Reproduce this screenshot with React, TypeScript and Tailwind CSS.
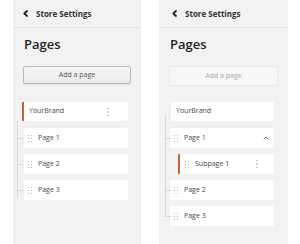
import type { ReactNode } from 'react'

const font = { fontFamily: '"Open Sans", "Noto Sans", Arial, sans-serif' }

function Chevron() {
  return (
    <svg width="5" height="7" viewBox="0 0 5 7" fill="none" stroke="#222" strokeWidth="1.8" strokeLinecap="round" strokeLinejoin="round">
      <path d="M4 1L1.3 3.5L4 6" />
    </svg>
  )
}

function Handle() {
  return (
    <svg width="4" height="7" viewBox="0 0 4 7" fill="#b5b5b5">
      <rect x="0" y="0" width="1" height="1" />
      <rect x="0" y="3" width="1" height="1" />
      <rect x="0" y="6" width="1" height="1" />
      <rect x="3" y="0" width="1" height="1" />
      <rect x="3" y="3" width="1" height="1" />
      <rect x="3" y="6" width="1" height="1" />
    </svg>
  )
}

function Kebab() {
  return (
    <svg width="2" height="8" viewBox="0 0 2 8" fill="#9a9a9a">
      <rect x="0.5" y="0" width="1" height="1.4" />
      <rect x="0.5" y="3.3" width="1" height="1.4" />
      <rect x="0.5" y="6.6" width="1" height="1.4" />
    </svg>
  )
}

function ChevronUp() {
  return (
    <svg width="6" height="4" viewBox="0 0 6 4" fill="none" stroke="#777" strokeWidth="1" strokeLinecap="round">
      <path d="M1 3L3 1L5 3" />
    </svg>
  )
}

function Header({ pl }: { pl: string }) {
  return (
    <div className={`h-[28px] border-b border-[#e2e2e2] flex items-center gap-[8px] ${pl}`}>
      <Chevron />
      <span className="text-[8px] font-bold text-[#333]">Store Settings</span>
    </div>
  )
}

function Card({ className, children }: { className: string; children: ReactNode }) {
  return (
    <div className={`bg-white flex items-center rounded-[1px] shadow-[0_0_1px_rgba(0,0,0,0.06)] text-[7px] text-[#484848] ${className}`}>
      {children}
    </div>
  )
}

function PageRow({ label, className }: { label: string; className: string }) {
  return (
    <Card className={`h-[20px] pl-[4px] ${className}`}>
      <Handle />
      <span className="ml-[6px]">{label}</span>
    </Card>
  )
}

function Tick({ top }: { top: string }) {
  return <div className={`absolute left-0 w-[6px] h-px bg-[#d8d8d8] ${top}`} />
}

export default function App() {
  return (
    <div className="w-[300px] h-[244px] bg-white flex pl-[13px] gap-[18px] overflow-hidden" style={font}>
      {/* before */}
      <div className="w-[128px] h-full bg-[#f2f2f2] flex flex-col">
        <Header pl="pl-[10px]" />
        <div className="mt-[8px] pl-[11px] text-[13px] leading-[16px] font-semibold text-[#222]">Pages</div>
        <button className="mt-[14px] ml-[10px] w-[108px] h-[18px] rounded-[2px] border border-[#b9b9b9] bg-gradient-to-b from-[#f8f8f8] to-[#e9e9e9] shadow-[0_1px_1px_rgba(0,0,0,0.08)] text-[7px] text-[#555]">
          Add a page
        </button>
        <Card className="mt-[18px] ml-[9px] w-[106px] h-[19px] border-l-2 border-[#c8642e] pl-[5px] justify-between pr-[19px]">
          <span>YourBrand</span>
          <Kebab />
        </Card>
        <div className="relative ml-[4px] mt-[7px] flex flex-col gap-[6px] pl-[7px]">
          <div className="absolute left-0 top-[-7px] h-[77px] w-px bg-[#d8d8d8]" />
          <Tick top="top-[10px]" />
          <Tick top="top-[36px]" />
          <Tick top="top-[62px]" />
          <PageRow label="Page 1" className="w-[104px]" />
          <PageRow label="Page 2" className="w-[104px]" />
          <PageRow label="Page 3" className="w-[104px]" />
        </div>
      </div>

      {/* after */}
      <div className="w-[129px] h-full bg-[#f2f2f2] flex flex-col">
        <Header pl="pl-[13px]" />
        <div className="mt-[8px] pl-[11px] text-[13px] leading-[16px] font-semibold text-[#222]">Pages</div>
        <button className="mt-[14px] ml-[10px] w-[109px] h-[20px] rounded-[2px] border border-[#e6e8ea] bg-[#f6f7f8] text-[7px] text-[#a8a8a8]">
          Add a page
        </button>
        <Card className="mt-[16px] ml-[12px] w-[103px] h-[19px] pl-[5px]">
          <span>YourBrand</span>
        </Card>
        <div className="relative ml-[6px] mt-[7px] flex flex-col gap-[6px] pl-[5px]">
          <div className="absolute left-0 top-[-14px] h-[101px] w-px bg-[#d8d8d8]" />
          <Tick top="top-[10px]" />
          <Tick top="top-[62px]" />
          <Tick top="top-[88px]" />
          <Card className="w-[104px] h-[20px] pl-[4px] pr-[5px]">
            <Handle />
            <span className="ml-[6px] flex-1">Page 1</span>
            <ChevronUp />
          </Card>
          <Card className="ml-[8px] w-[96px] h-[20px] border-l-2 border-[#c8642e] pl-[5px] pr-[16px]">
            <Handle />
            <span className="ml-[6px] flex-1">Subpage 1</span>
            <Kebab />
          </Card>
          <PageRow label="Page 2" className="w-[104px]" />
          <PageRow label="Page 3" className="w-[104px]" />
        </div>
      </div>
    </div>
  )
}
